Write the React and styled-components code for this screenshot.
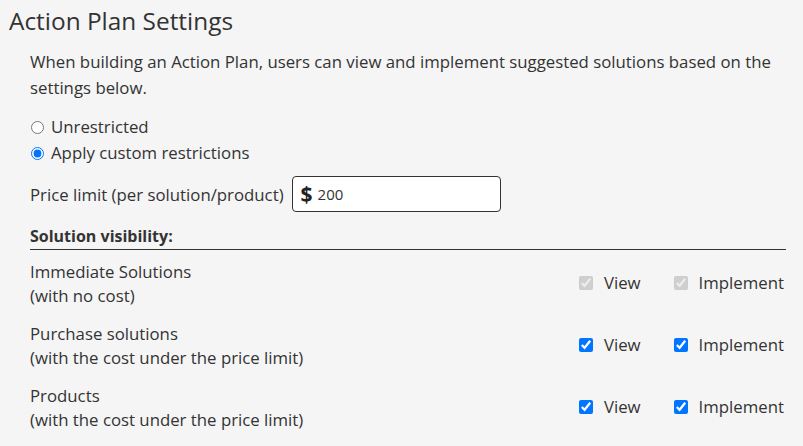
import React from 'react'
import styled, { createGlobalStyle } from 'styled-components'

const GlobalStyle = createGlobalStyle`
  html, body {
    margin: 0;
    padding: 0;
    background: #f5f5f5;
  }
  body {
    font-family: "Open Sans", "Liberation Sans", sans-serif;
    color: #333;
  }
`

const Page = styled.div`
  padding: 4px 19px 0 9px;
`

const Title = styled.h1`
  margin: 0;
  font-size: 24.4px;
  font-weight: 400;
  line-height: 34px;
  color: #333;
`

const Body = styled.div`
  padding-left: 21px;
  padding-top: 11px;
`

const Intro = styled.p`
  margin: 0;
  font-size: 16.8px;
  line-height: 26px;
`

const RadioGroup = styled.div`
  margin-top: 14px;
  display: flex;
  flex-direction: column;
  gap: 2px;
`

const RadioLabel = styled.label`
  display: flex;
  align-items: center;
  font-size: 16.8px;
  line-height: 24px;
  gap: 7px;

  input {
    margin: 0 0 0 1px;
    width: 13px;
    height: 13px;
  }
`

const PriceRow = styled.div`
  margin-top: 11px;
  display: flex;
  align-items: center;
  gap: 8px;
  font-size: 16.8px;
`

const PriceBox = styled.div`
  width: 209px;
  height: 36px;
  box-sizing: border-box;
  border: 1px solid #333;
  border-radius: 4px;
  background: #fff;
  display: flex;
  align-items: center;
  padding-left: 8px;
  gap: 5px;
`

const Dollar = styled.span`
  font-size: 21px;
  font-weight: 700;
  color: #222;
`

const PriceInput = styled.input`
  border: none;
  outline: none;
  background: transparent;
  font-family: inherit;
  font-size: 15px;
  color: #333;
  width: 100%;
  padding: 0;
`

const SectionHead = styled.div`
  margin-top: 13px;
  margin-right: -2px;
  font-size: 16px;
  font-weight: 700;
  line-height: 22px;
  padding-bottom: 2px;
  border-bottom: 1px solid #333;
`

const Rows = styled.div`
  margin-top: 10px;
  display: flex;
  flex-direction: column;
  gap: 14px;
`

const Row = styled.div`
  display: flex;
  align-items: center;
  justify-content: space-between;
  font-size: 16.8px;
  line-height: 24px;
`

const Checks = styled.div`
  display: flex;
  align-items: center;
  gap: 33px;
  padding-bottom: 3px;
`

const CheckLabel = styled.label`
  display: flex;
  align-items: center;
  gap: 11px;
  font-size: 16.8px;

  input {
    margin: 0;
    width: 14px;
    height: 14px;
  }
`

const rows = [
  { name: 'Immediate Solutions', note: '(with no cost)', disabled: true },
  { name: 'Purchase solutions', note: '(with the cost under the price limit)' },
  { name: 'Products', note: '(with the cost under the price limit)' },
]

export default function App() {
  return (
    <>
      <GlobalStyle />
      <Page>
        <Title>Action Plan Settings</Title>
        <Body>
          <Intro>
            When building an Action Plan, users can view and implement suggested solutions based on the settings below.
          </Intro>
          <RadioGroup>
            <RadioLabel>
              <input type="radio" name="restrict" />
              Unrestricted
            </RadioLabel>
            <RadioLabel>
              <input type="radio" name="restrict" defaultChecked />
              Apply custom restrictions
            </RadioLabel>
          </RadioGroup>
          <PriceRow>
            <span>Price limit (per solution/product)</span>
            <PriceBox>
              <Dollar>$</Dollar>
              <PriceInput defaultValue="200" />
            </PriceBox>
          </PriceRow>
          <SectionHead>Solution visibility:</SectionHead>
          <Rows>
            {rows.map((r) => (
              <Row key={r.name}>
                <div>
                  {r.name}
                  <br />
                  {r.note}
                </div>
                <Checks>
                  <CheckLabel>
                    <input type="checkbox" defaultChecked disabled={r.disabled} />
                    View
                  </CheckLabel>
                  <CheckLabel>
                    <input type="checkbox" defaultChecked disabled={r.disabled} />
                    Implement
                  </CheckLabel>
                </Checks>
              </Row>
            ))}
          </Rows>
        </Body>
      </Page>
    </>
  )
}
